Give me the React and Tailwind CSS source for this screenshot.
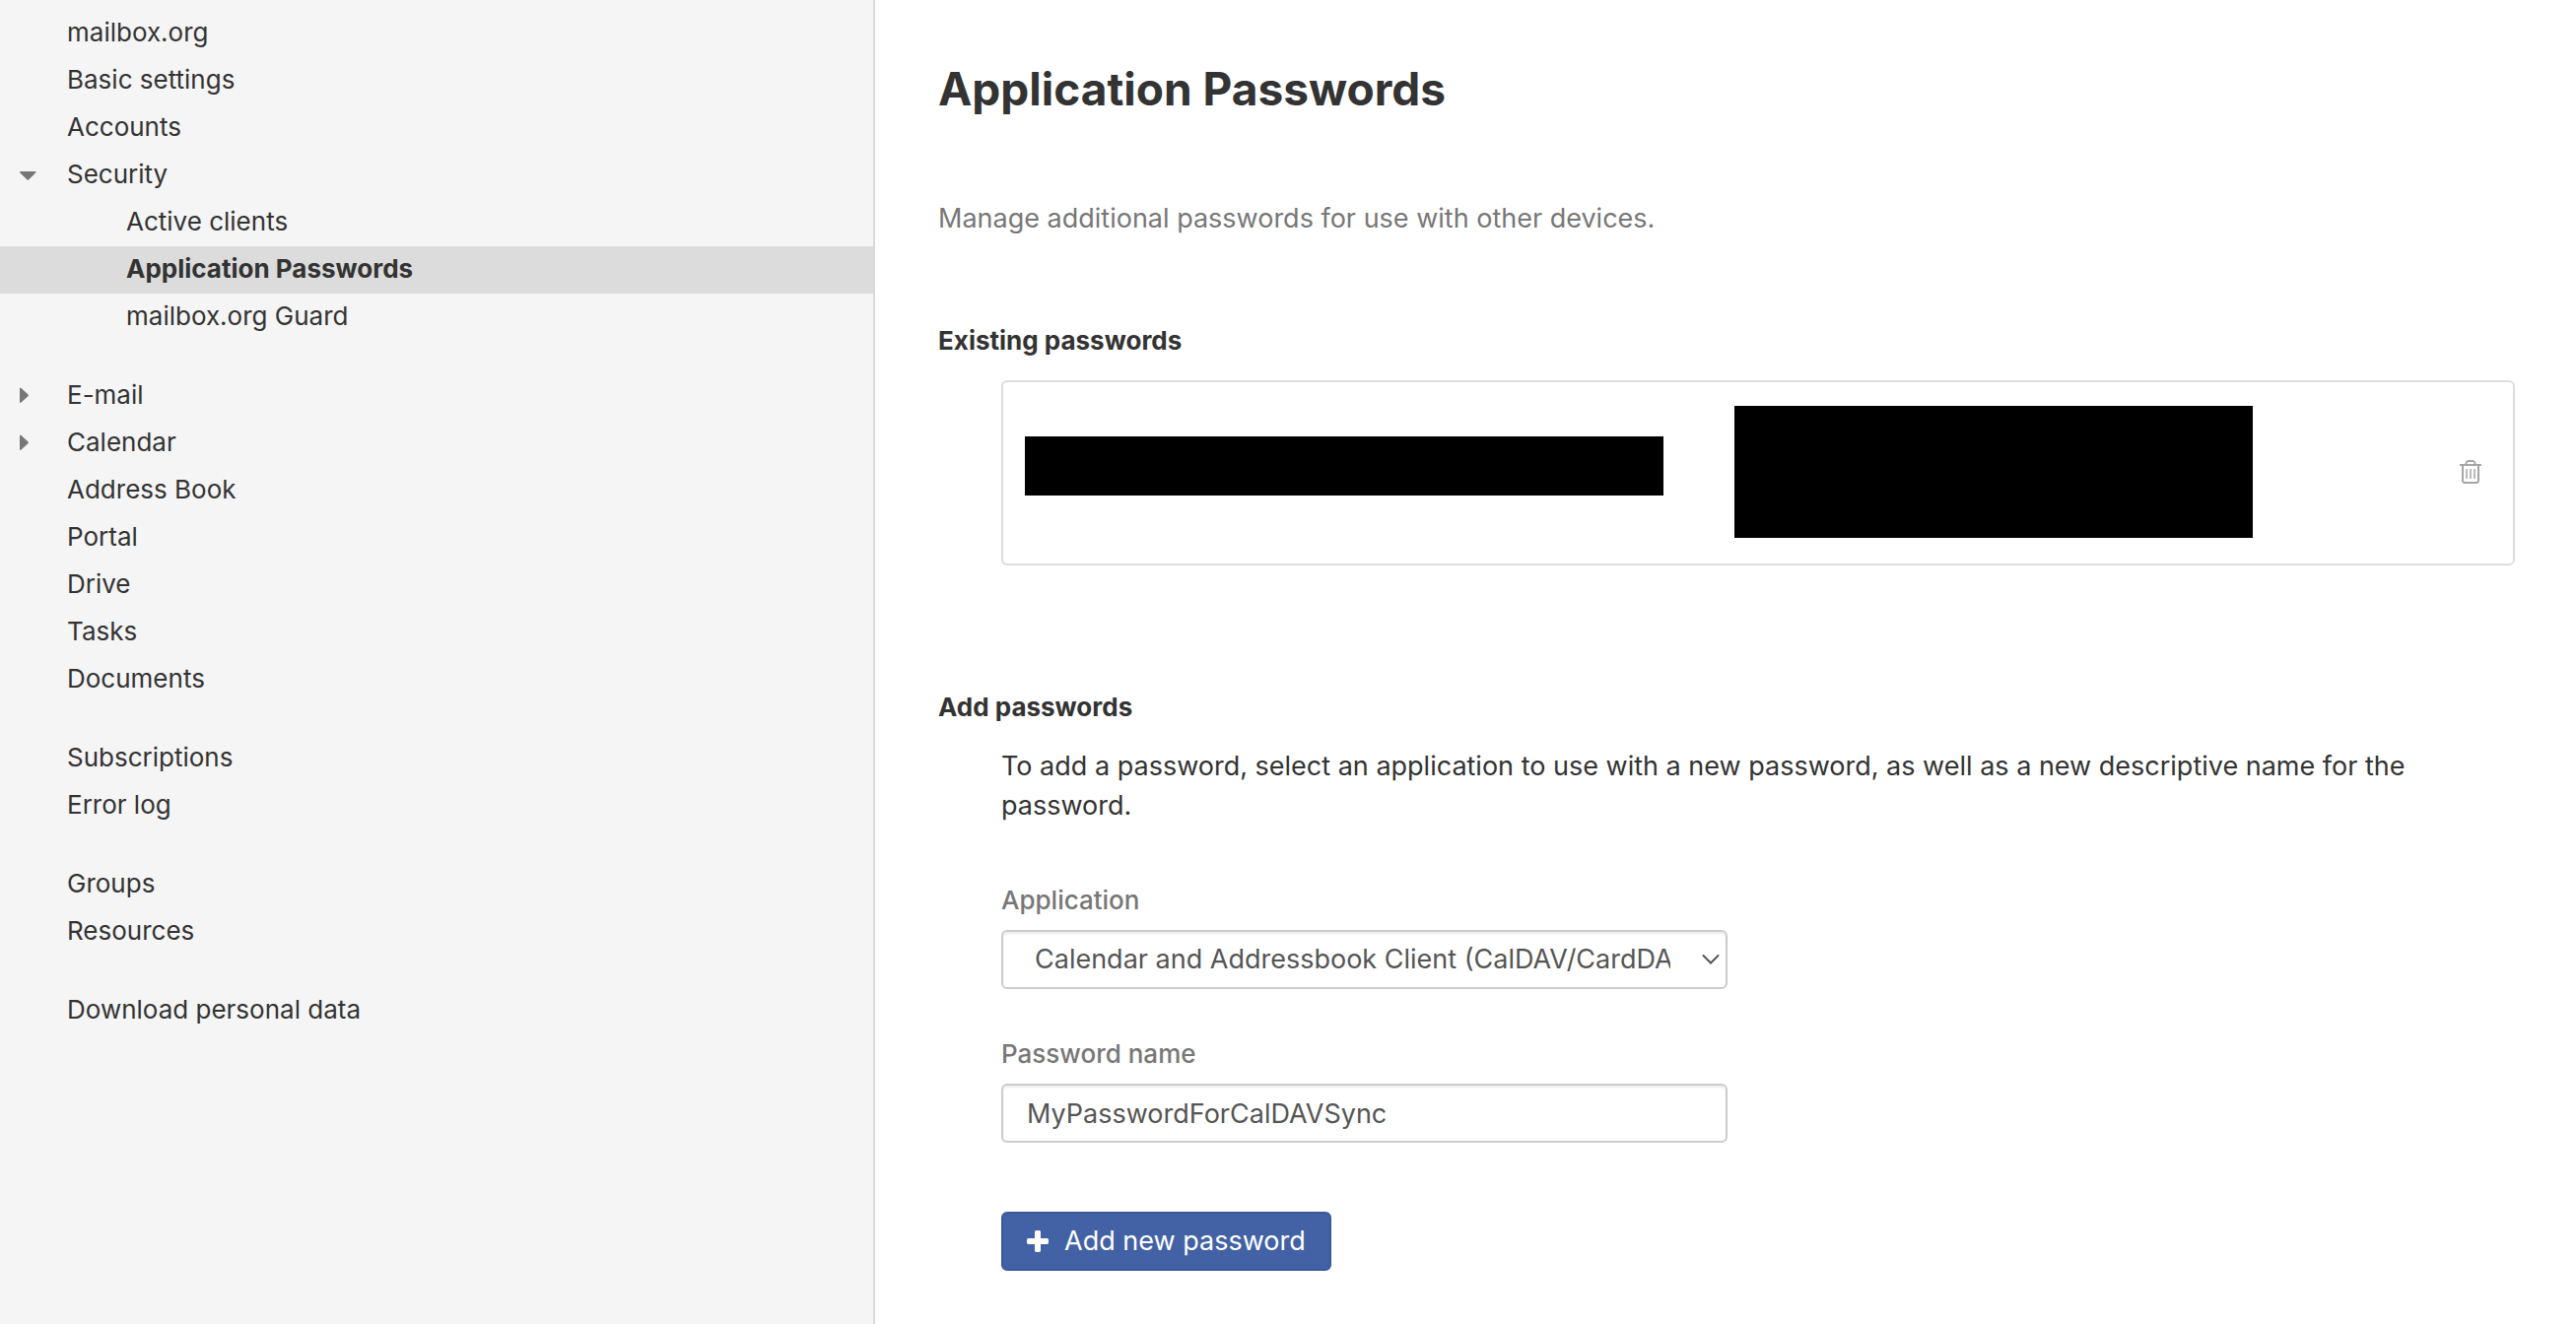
const groups = [
  [
    { label: 'mailbox.org' },
    { label: 'Basic settings' },
    { label: 'Accounts' },
    { label: 'Security', caret: 'down' },
    { label: 'Active clients', nested: true },
    { label: 'Application Passwords', nested: true, selected: true },
    { label: 'mailbox.org Guard', nested: true },
  ],
  [
    { label: 'E-mail', caret: 'right' },
    { label: 'Calendar', caret: 'right' },
    { label: 'Address Book' },
    { label: 'Portal' },
    { label: 'Drive' },
    { label: 'Tasks' },
    { label: 'Documents' },
  ],
  [{ label: 'Subscriptions' }, { label: 'Error log' }],
  [{ label: 'Groups' }, { label: 'Resources' }],
  [{ label: 'Download personal data' }],
];

function Caret({ direction }) {
  return (
    <svg viewBox="0 0 18 18" className="size-[18px]" fill="#777777" aria-hidden="true">
      {direction === 'down' ? (
        <path d="M1 6h14.500q1 0 1 .7 0 .4-.4.8L9 14.400q-.7.600-1.400 0L.4 7.500Q0 7.100 0 6.700 0 6 1 6z" />
      ) : (
        <path d="M.700 1.500q-.7 0-.7 1v13.500q0 1 .7 1 .4 0 .8-.4L8.600 10q.700-.700 0-1.400L1.500 1.900Q1.100 1.500.700 1.500z" />
      )}
    </svg>
  );
}

function NavItem({ label, caret, nested, selected }) {
  return (
    <li>
      <a
        href="#"
        aria-current={selected ? 'page' : undefined}
        className={
          'flex h-12 items-center pb-[3px] ' + (selected ? 'bg-[#dcdcdc] font-bold' : '')
        }
      >
        <span className={nested ? 'w-32 shrink-0' : 'flex w-[68px] shrink-0 pl-5'}>
          {caret && <Caret direction={caret} />}
        </span>
        <span>{label}</span>
      </a>
    </li>
  );
}

function Sidebar() {
  return (
    <nav
      aria-label="Settings"
      className="flex flex-col gap-8 border-r-2 border-[#d9d9d9] bg-[#f5f5f5] pt-2.5 text-[26px] leading-10"
    >
      {groups.map((items) => (
        <ul key={items[0].label}>
          {items.map((item) => (
            <NavItem key={item.label} {...item} />
          ))}
        </ul>
      ))}
    </nav>
  );
}

function TrashIcon() {
  return (
    <svg viewBox="0 0 22 24" className="h-6 w-[22px]" fill="none" stroke="#a6a6a6" strokeWidth="2" aria-hidden="true">
      <path d="M0 5h22" />
      <path d="M6 5l1-3q.4-1 1.500-1h5q1.100 0 1.500 1l1 3" />
      <path d="M3 5v15.500Q3 23 5.300 23h11.400Q19 23 19 20.500V5" />
      <path d="M7 9v10M11 9v10M15 9v10" strokeWidth="1.500" />
    </svg>
  );
}

function ExistingPasswords() {
  return (
    <section>
      <h2 className="text-[26px] leading-10 font-bold">Existing passwords</h2>
      <ul className="mt-5 ml-16">
        <li className="grid grid-cols-[324fr_263fr_80fr] items-center gap-x-[72px] rounded-md border-2 border-[#dddddd] pt-6 pr-8 pb-[26px] pl-[22px]">
          <div className="mb-3 h-[60px] bg-black" />
          <div className="h-[134px] bg-black" />
          <button type="button" aria-label="Delete" className="justify-self-end">
            <TrashIcon />
          </button>
        </li>
      </ul>
    </section>
  );
}

function AddPasswords() {
  return (
    <section className="mt-[124px]">
      <h2 className="text-[26px] leading-10 font-bold">Add passwords</h2>
      <form className="mt-5 ml-16" onSubmit={(e) => e.preventDefault()}>
        <p className="text-[27px] leading-10">
          To add a password, select an application to use with a new password, as well as a new
          descriptive name for the password.
        </p>
        <div className="mt-14 w-[48%]">
          <label htmlFor="application" className="block text-[26px] leading-10 font-medium text-[#777777]">
            Application
          </label>
          <div className="relative mt-2.5">
            <select
              id="application"
              className="block h-[60px] w-full appearance-none rounded-md border-2 border-[#cccccc] bg-white pr-14 pl-8 text-[27px] text-[#555555] shadow-[inset_0_2px_2px_rgba(0,0,0,0.075)]"
            >
              <option>Calendar and Addressbook Client (CalDAV/CardDAV)</option>
            </select>
            <svg
              viewBox="0 0 18 12"
              className="pointer-events-none absolute top-6 right-2 h-3 w-[18px]"
              fill="none"
              stroke="#555555"
              strokeWidth="2"
              strokeLinecap="round"
              aria-hidden="true"
            >
              <path d="M1.500 2L9 9.500 16.500 2" />
            </svg>
          </div>
          <label htmlFor="password-name" className="mt-[46px] block text-[26px] leading-10 font-medium text-[#777777]">
            Password name
          </label>
          <input
            id="password-name"
            type="text"
            defaultValue="MyPasswordForCalDAVSync"
            className="mt-2.5 block h-[60px] w-full rounded-md border-2 border-[#cccccc] bg-white px-6 text-[27px] text-[#555555] shadow-[inset_0_2px_2px_rgba(0,0,0,0.075)]"
          />
        </div>
        <button
          type="submit"
          className="mt-[70px] flex h-[60px] items-center gap-4 rounded-md border-2 border-[#3b5998] bg-[#4361a5] px-6 text-[27px] text-white"
        >
          <svg viewBox="192 128 1408 1408" className="size-[22px]" fill="currentColor" aria-hidden="true">
            <path d="M1600 736v192q0 40-28 68t-68 28h-416v416q0 40-28 68t-68 28h-192q-40 0-68-28t-28-68v-416h-416q-40 0-68-28t-28-68v-192q0-40 28-68t68-28h416v-416q0-40 28-68t68-28h192q40 0 68 28t28 68v416h416q40 0 68 28t28 68z" />
          </svg>
          Add new password
        </button>
      </form>
    </section>
  );
}

export default function App() {
  return (
    <div className="grid min-h-screen grid-cols-[444fr_863fr] bg-white font-['Inter',sans-serif] text-[#333333]">
      <Sidebar />
      <main className="min-w-0 pt-[60px] pr-[62px] pb-[54px] pl-16">
        <h1 className="text-[46px] leading-[60px] font-bold">Application Passwords</h1>
        <p className="mt-[82px] mb-[84px] text-[27px] leading-10 text-[#777777]">
          Manage additional passwords for use with other devices.
        </p>
        <ExistingPasswords />
        <AddPasswords />
      </main>
    </div>
  );
}
